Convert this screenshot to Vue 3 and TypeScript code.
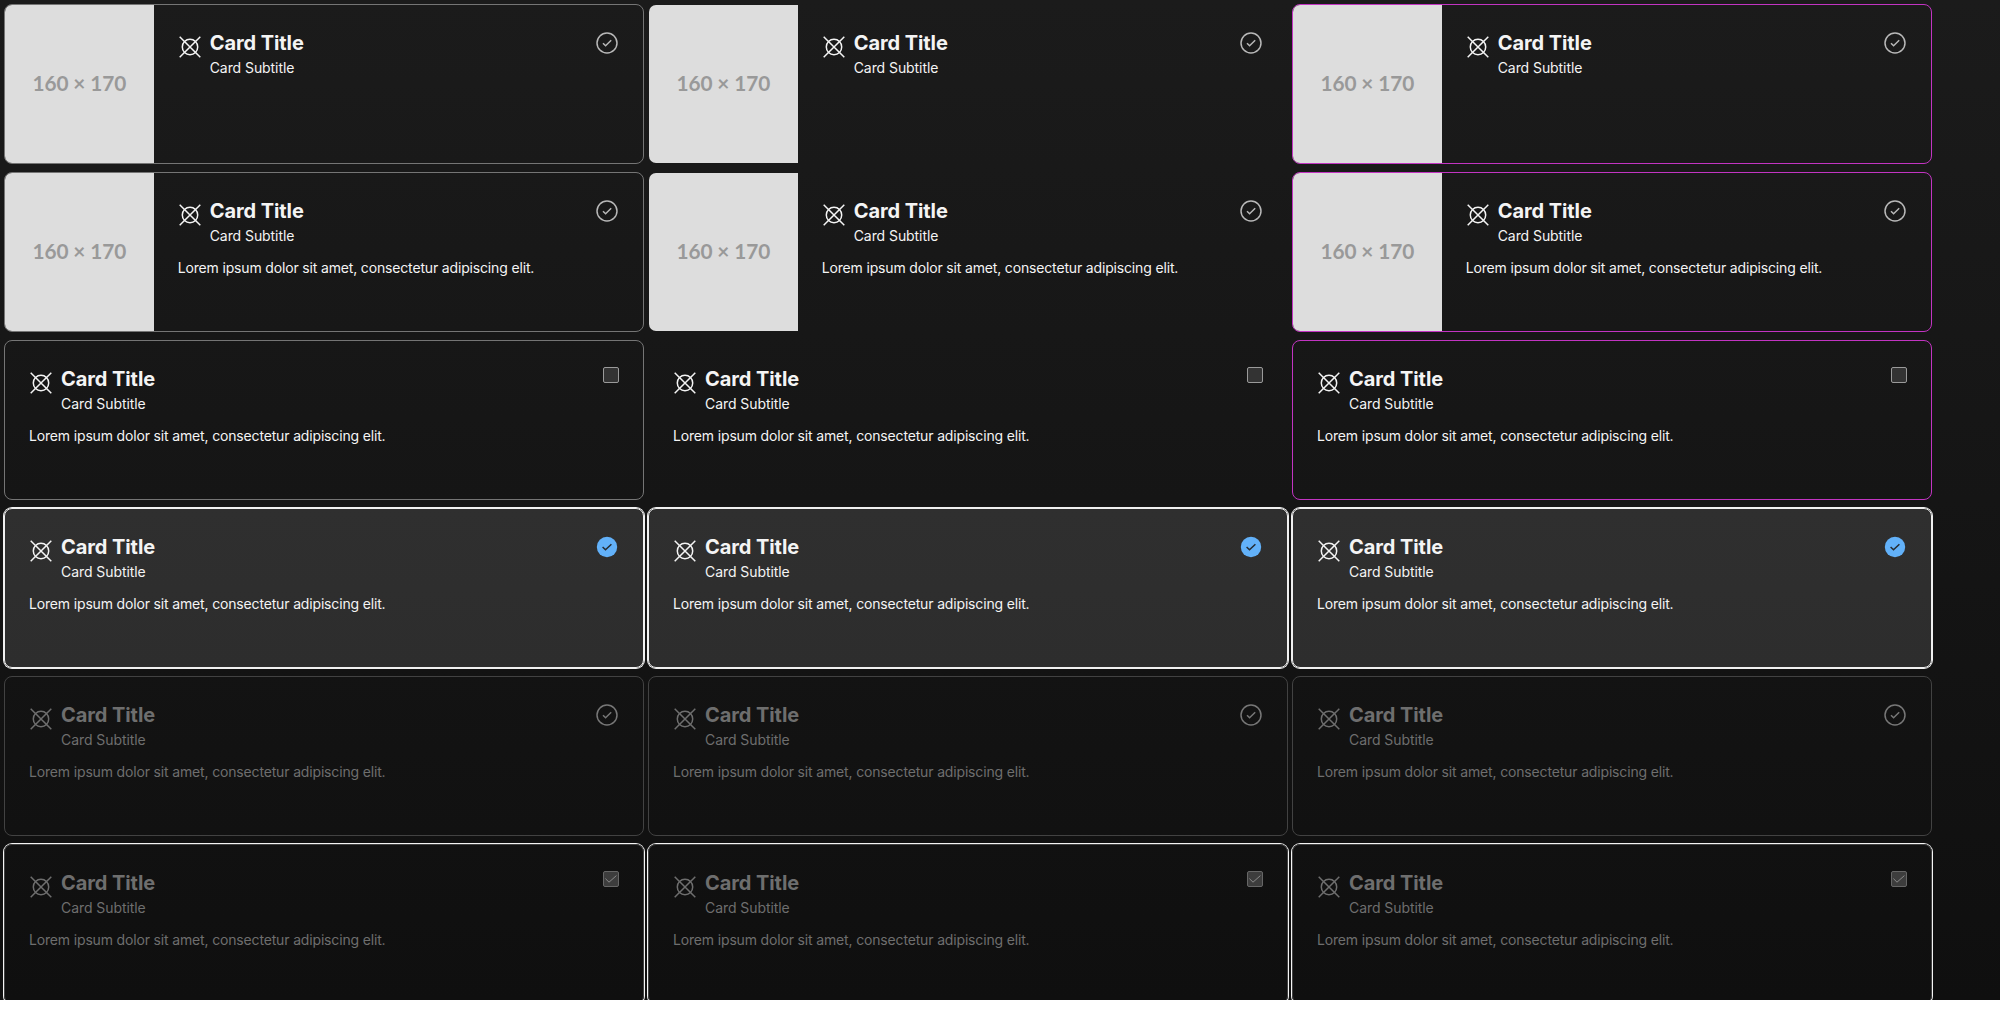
<script setup lang="ts">
type Indicator = 'circle' | 'box' | 'filled' | 'box-checked'
interface Row {
  image: boolean
  body: boolean
  state: 'default' | 'selected' | 'disabled' | 'disabled-selected'
  indicator: Indicator
}

const variants = ['outlined', 'plain', 'accent'] as const

const rows: Row[] = [
  { image: true, body: false, state: 'default', indicator: 'circle' },
  { image: true, body: true, state: 'default', indicator: 'circle' },
  { image: false, body: true, state: 'default', indicator: 'box' },
  { image: false, body: true, state: 'selected', indicator: 'filled' },
  { image: false, body: true, state: 'disabled', indicator: 'circle' },
  { image: false, body: true, state: 'disabled-selected', indicator: 'box-checked' },
]
</script>

<template>
  <main class="page">
    <div v-for="(row, i) in rows" :key="i" class="row">
      <article v-for="variant in variants" :key="variant" class="card" :class="[variant, row.state]">
        <div v-if="row.image" class="media"><span>160 × 170</span></div>
        <div class="content">
          <header class="header">
            <svg class="glyph" viewBox="0 0 24 24">
              <circle cx="12" cy="12" r="7.7" />
              <path d="M1.7 1.7 22.3 22.3M22.3 1.7 1.7 22.3" />
            </svg>
            <div class="titles">
              <h3>Card Title</h3>
              <p>Card Subtitle</p>
            </div>
            <svg v-if="row.indicator === 'circle'" class="round" viewBox="0 0 24 24">
              <circle cx="12" cy="12" r="10" />
              <path d="M8 12.2 10.6 14.8 16.2 9.3" />
            </svg>
            <svg v-else-if="row.indicator === 'filled'" class="round filled" viewBox="0 0 24 24">
              <circle cx="12" cy="12" r="10.2" />
              <path d="M7.6 12 10.5 14.8 16.4 9.2" />
            </svg>
            <span v-else class="box">
              <svg v-if="row.indicator === 'box-checked'" viewBox="0 0 16 16">
                <path d="M2.4 7.6 6 11.2 13.4 4.6" />
              </svg>
            </span>
          </header>
          <p v-if="row.body" class="text">Lorem ipsum dolor sit amet, consectetur adipiscing elit.</p>
        </div>
      </article>
    </div>
  </main>
</template>

<style>
body {
  background: #fff;
  overflow: hidden;
}
</style>

<style scoped>
.page {
  box-sizing: border-box;
  height: 1000px;
  padding: 4px;
  overflow: hidden;
  display: flex;
  flex-direction: column;
  gap: 8px;
  background: linear-gradient(180deg, #1b1b1b, #0f0f0f);
  color: #f4f4f4;
  font-family: Inter, "Liberation Sans", sans-serif;
}
.row {
  display: flex;
  flex: none;
  gap: 4px;
}
.card {
  box-sizing: border-box;
  width: 640px;
  height: 160px;
  flex: none;
  display: flex;
  border: 1px solid #757575;
  border-radius: 8px;
  overflow: hidden;
}
.card.plain {
  border-color: transparent;
}
.card.accent {
  border-color: #c234c2;
}
.card.selected {
  background: linear-gradient(180deg, #2f2f2f, #2d2d2d);
  border-color: #f0f0f0;
  box-shadow: 0 0 0 1px #f0f0f0;
}
.card.disabled,
.card.disabled-selected {
  border-color: #424242;
  color: #6e6e6e;
}
.card.disabled-selected {
  box-shadow: 0 0 0 1px #f4f4f4;
}
.media {
  box-sizing: border-box;
  width: 148.7px;
  padding-bottom: 2px;
  flex: none;
  display: flex;
  align-items: center;
  justify-content: center;
  background: #ddd;
  color: #999;
  font: 700 20.8px/24px Lato, sans-serif;
  letter-spacing: -0.1px;
  white-space: nowrap;
}
.content {
  flex: 1;
  padding: 24px;
}
.header {
  display: flex;
  align-items: flex-start;
}
.glyph {
  width: 24px;
  height: 24px;
  margin: 6px 8px 0 0;
  flex: none;
  fill: none;
  stroke: currentColor;
  stroke-width: 1.5;
}
.titles {
  flex: 1;
}
h3,
p {
  margin: 0;
}
h3 {
  font-size: 20px;
  font-weight: 700;
  line-height: 28px;
  letter-spacing: -0.08px;
}
.titles p {
  font-size: 14px;
  line-height: 22px;
  letter-spacing: -0.07px;
}
.text {
  margin-top: 11px;
  font-size: 14px;
  line-height: 20px;
  letter-spacing: -0.16px;
}
.round {
  width: 24px;
  height: 24px;
  margin-top: 2px;
  flex: none;
  fill: none;
  stroke: #b8b8b8;
  stroke-width: 1.5;
}
.round.filled circle {
  fill: #62b1f9;
  stroke: none;
}
.round.filled path {
  stroke: #262b30;
}
.box {
  box-sizing: border-box;
  width: 16px;
  height: 16px;
  margin-top: 2px;
  flex: none;
  border: 1px solid #9a9a9a;
  border-radius: 2px;
  background: #333;
}
.box svg {
  display: block;
  width: 16px;
  height: 16px;
  margin: -1px;
  fill: none;
  stroke: #8a8a8a;
  stroke-width: 1;
}
.disabled .round {
  stroke: #777;
}
.disabled-selected .box {
  border-color: #666;
  background: #3d3d3d;
}
</style>
